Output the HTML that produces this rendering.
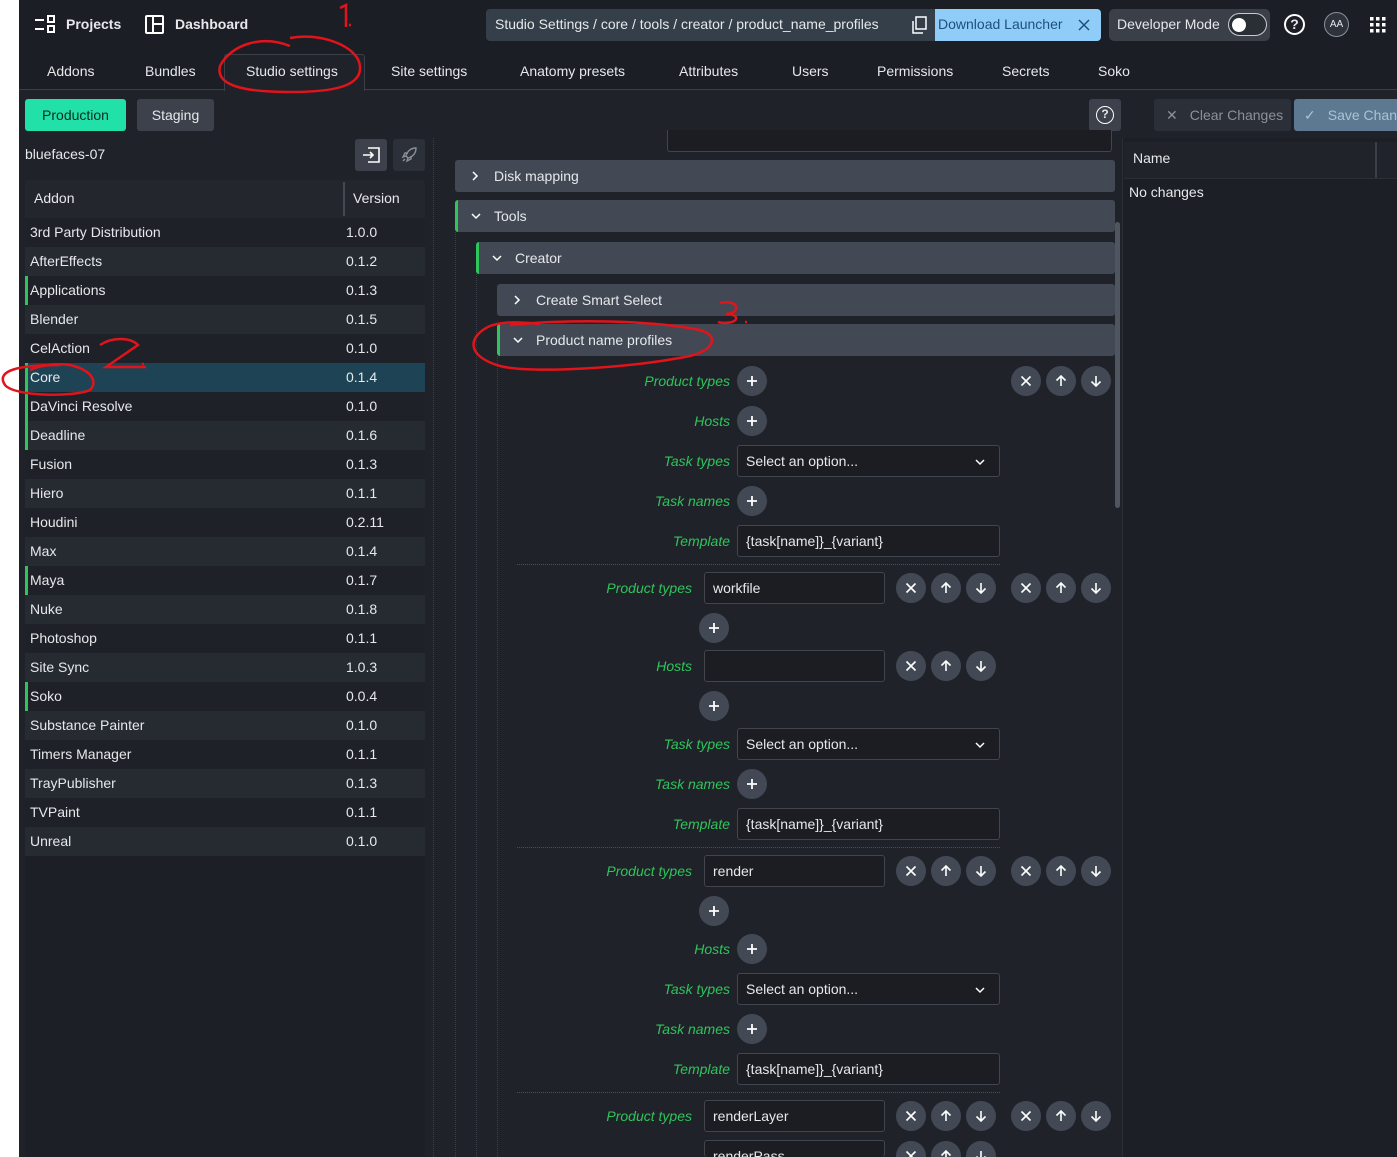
<!DOCTYPE html>
<html style="overflow:hidden;width:1397px;height:1157px"><head><meta charset="utf-8"><style>
*{box-sizing:border-box;margin:0;padding:0}
html{overflow:hidden}
body{width:1397px;height:1157px;overflow:hidden;background:#1f2229;font-family:"Liberation Sans",sans-serif;font-size:14px;color:#e6e8eb;position:relative}
.a{position:absolute}
.t{position:absolute;white-space:nowrap}
.lbl{position:absolute;width:200px;text-align:right;font-style:italic;color:#2ec55a;font-size:14px;white-space:nowrap}
.cb{position:absolute;width:30px;height:30px;border-radius:50%;background:#434954}
.cb svg{position:absolute;left:7px;top:7px}
.inp{position:absolute;height:32px;border:1px solid #40454e;border-radius:3px;background:#1b1d22;padding:0 8px;line-height:30px;white-space:nowrap}
.acc{position:absolute;height:32px;background:#434954;border-radius:3px;line-height:32px;font-size:14px}
.acc .ch{position:absolute;left:15px;top:11px}
.row{position:absolute;left:25px;width:400px;height:29px;line-height:29px}
.row span{position:absolute;left:5px}
.row b{position:absolute;left:321px;font-weight:normal}
.sep{position:absolute;left:517px;width:483px;border-top:1px dotted #4a4f58;height:0}
</style></head><body>
<svg width="0" height="0" style="position:absolute"><defs>
<symbol id="plus" viewBox="0 0 16 16"><path d="M8 3v10M3 8h10" stroke="#fff" stroke-width="1.8" fill="none"/></symbol>
<symbol id="x" viewBox="0 0 16 16"><path d="M3.5 3.5l9 9M12.5 3.5l-9 9" stroke="#fff" stroke-width="1.6" fill="none"/></symbol>
<symbol id="up" viewBox="0 0 16 16"><path d="M8 13V3M3.5 7.5L8 3l4.5 4.5" stroke="#fff" stroke-width="1.6" fill="none"/></symbol>
<symbol id="dn" viewBox="0 0 16 16"><path d="M8 3v10M3.5 8.5L8 13l4.5-4.5" stroke="#fff" stroke-width="1.6" fill="none"/></symbol>
<symbol id="chr" viewBox="0 0 10 10"><path d="M3 1l4 4-4 4" stroke="#fff" stroke-width="1.5" fill="none"/></symbol>
<symbol id="chd" viewBox="0 0 10 10"><path d="M1 3l4 4 4-4" stroke="#fff" stroke-width="1.5" fill="none"/></symbol>
</defs></svg>

<div class="a" style="left:0;top:0;width:19px;height:1157px;background:#fff"></div>
<div class="a" style="left:19px;top:0;width:1378px;height:90px;background:#1b1e24;border-bottom:1px solid #3a3f48"></div>
<svg class="a" style="left:34px;top:15px" width="22" height="18"><path d="M1 5h9M1 14h9" stroke="#fff" stroke-width="2"/><rect x="14" y="1" width="6" height="6" fill="none" stroke="#fff" stroke-width="2"/><rect x="14" y="11" width="6" height="6" fill="none" stroke="#fff" stroke-width="2"/></svg>
<div class="t" style="left:66px;top:16px;font-weight:bold">Projects</div>
<svg class="a" style="left:145px;top:15px" width="19" height="19"><rect x="1" y="1" width="17" height="17" rx="1" fill="none" stroke="#fff" stroke-width="2"/><path d="M8 1v17M8 9h10" stroke="#fff" stroke-width="2"/></svg>
<div class="t" style="left:175px;top:16px;font-weight:bold">Dashboard</div>
<div class="a" style="left:486px;top:9px;width:452px;height:32px;background:#343f49;border-radius:4px"></div>
<div class="t" style="left:495px;top:16px">Studio Settings / core / tools / creator / product_name_profiles</div>
<svg class="a" style="left:912px;top:16px" width="16" height="18"><path d="M4 1h10v12H4z M1 5v12h10" fill="none" stroke="#fff" stroke-width="1.5"/></svg>
<div class="a" style="left:935px;top:9px;width:166px;height:32px;background:#8fcdf8;border-radius:0 4px 4px 0"></div>
<div class="t" style="left:938px;top:16px;color:#1e4f7e">Download Launcher</div>
<svg class="a" style="left:1078px;top:19px" width="12" height="12"><path d="M1 1l10 10M11 1L1 11" stroke="#1e4f7e" stroke-width="1.5"/></svg>
<div class="a" style="left:1109px;top:9px;width:161px;height:32px;background:#3a3f48;border-radius:5px"></div>
<div class="t" style="left:1117px;top:16px">Developer Mode</div>
<div class="a" style="left:1228px;top:13px;width:39px;height:23px;border:1.5px solid #c8ccd2;border-radius:12px;background:#2a2e35"></div>
<div class="a" style="left:1232px;top:18px;width:14px;height:14px;border-radius:50%;background:#fff"></div>
<div class="a" style="left:1284px;top:14px;width:21px;height:21px;border:2px solid #fff;border-radius:50%;text-align:center;font-weight:bold;font-size:14px;line-height:17px">?</div>
<div class="a" style="left:1324px;top:12px;width:25px;height:25px;border:1px solid #8a9099;border-radius:50%;background:#2e323a;text-align:center;font-size:10px;line-height:23px">AA</div>
<svg class="a" style="left:1370px;top:17px" width="16" height="16" fill="#fff"><rect x="0" y="0" width="3.5" height="3.5"/><rect x="6" y="0" width="3.5" height="3.5"/><rect x="12" y="0" width="3.5" height="3.5"/><rect x="0" y="6" width="3.5" height="3.5"/><rect x="6" y="6" width="3.5" height="3.5"/><rect x="12" y="6" width="3.5" height="3.5"/><rect x="0" y="12" width="3.5" height="3.5"/><rect x="6" y="12" width="3.5" height="3.5"/><rect x="12" y="12" width="3.5" height="3.5"/></svg>

<div class="a" style="left:224px;top:54px;width:141px;height:37px;background:#1f2229;border:1px solid #3a3f48;border-bottom:none;border-radius:3px 3px 0 0"></div>
<div class="t" style="left:47px;top:63px">Addons</div>
<div class="t" style="left:145px;top:63px">Bundles</div>
<div class="t" style="left:246px;top:63px">Studio settings</div>
<div class="t" style="left:391px;top:63px">Site settings</div>
<div class="t" style="left:520px;top:63px">Anatomy presets</div>
<div class="t" style="left:679px;top:63px">Attributes</div>
<div class="t" style="left:792px;top:63px">Users</div>
<div class="t" style="left:877px;top:63px">Permissions</div>
<div class="t" style="left:1002px;top:63px">Secrets</div>
<div class="t" style="left:1098px;top:63px">Soko</div>

<div class="a" style="left:25px;top:99px;width:101px;height:32px;background:#21e1a8;border-radius:3px;color:#0f2a22;text-align:center;line-height:32px">Production</div>
<div class="a" style="left:137px;top:99px;width:77px;height:32px;background:#3c414b;border-radius:3px;text-align:center;line-height:32px">Staging</div>
<div class="a" style="left:1089px;top:99px;width:32px;height:32px;background:#3c414b;border-radius:3px"></div>
<div class="a" style="left:1096px;top:106px;width:18px;height:18px;border:1.6px solid #fff;border-radius:50%;text-align:center;font-size:12px;font-weight:bold;line-height:15px">?</div>
<div class="a" style="left:1154px;top:99px;width:137px;height:32px;background:#2b2f37;border-radius:3px;color:#8b919a;line-height:32px"><span style="margin-left:12px">✕</span><span style="margin-left:12px">Clear Changes</span></div>
<div class="a" style="left:1294px;top:99px;width:110px;height:32px;background:#5c7991;border-radius:3px;color:#aac2d6;line-height:32px;white-space:nowrap"><span style="margin-left:10px">✓</span><span style="margin-left:12px">Save Changes</span></div>

<div class="a" style="left:19px;top:138px;width:414px;height:1019px;background:#1f2229"></div>
<div class="t" style="left:25px;top:146px">bluefaces-07</div>
<div class="a" style="left:355px;top:139px;width:32px;height:32px;background:#3c414b;border-radius:3px"></div>
<svg class="a" style="left:362px;top:147px" width="18" height="16"><path d="M6 1h11v14H6M1 8h10M8 5l3 3-3 3" fill="none" stroke="#fff" stroke-width="1.6"/></svg>
<div class="a" style="left:393px;top:139px;width:32px;height:32px;background:#2c3038;border-radius:3px"></div>
<svg class="a" style="left:400px;top:146px" width="18" height="18"><path d="M16 2c-6 0-9 4-10 8l2 2c4-1 8-4 8-10zM6 10l-3 1 2-4h3M8 12l-1 3 4-2v-3M3 15l2-2" fill="none" stroke="#8a9099" stroke-width="1.4"/></svg>
<div class="a" style="left:25px;top:180px;width:400px;height:977px;background:#1c1f25;border-radius:4px 4px 0 0"></div>
<div class="a" style="left:25px;top:180px;width:400px;height:38px;background:#23262d;border-radius:4px 4px 0 0"></div>
<div class="a" style="left:343px;top:182px;width:2px;height:34px;background:#444952"></div>
<div class="t" style="left:34px;top:190px">Addon</div>
<div class="t" style="left:353px;top:190px">Version</div>

<div class="row" style="top:218px;background:#1e2127"><span>3rd Party Distribution</span><b>1.0.0</b></div>
<div class="row" style="top:247px;background:#262a31"><span>AfterEffects</span><b>0.1.2</b></div>
<div class="row" style="top:276px;background:#1e2127"><span>Applications</span><b>0.1.3</b></div>
<div class="row" style="top:305px;background:#262a31"><span>Blender</span><b>0.1.5</b></div>
<div class="row" style="top:334px;background:#1e2127"><span>CelAction</span><b>0.1.0</b></div>
<div class="row" style="top:363px;background:#1e4354"><span>Core</span><b>0.1.4</b></div>
<div class="row" style="top:392px;background:#1e2127"><span>DaVinci Resolve</span><b>0.1.0</b></div>
<div class="row" style="top:421px;background:#262a31"><span>Deadline</span><b>0.1.6</b></div>
<div class="row" style="top:450px;background:#1e2127"><span>Fusion</span><b>0.1.3</b></div>
<div class="row" style="top:479px;background:#262a31"><span>Hiero</span><b>0.1.1</b></div>
<div class="row" style="top:508px;background:#1e2127"><span>Houdini</span><b>0.2.11</b></div>
<div class="row" style="top:537px;background:#262a31"><span>Max</span><b>0.1.4</b></div>
<div class="row" style="top:566px;background:#1e2127"><span>Maya</span><b>0.1.7</b></div>
<div class="row" style="top:595px;background:#262a31"><span>Nuke</span><b>0.1.8</b></div>
<div class="row" style="top:624px;background:#1e2127"><span>Photoshop</span><b>0.1.1</b></div>
<div class="row" style="top:653px;background:#262a31"><span>Site Sync</span><b>1.0.3</b></div>
<div class="row" style="top:682px;background:#1e2127"><span>Soko</span><b>0.0.4</b></div>
<div class="row" style="top:711px;background:#262a31"><span>Substance Painter</span><b>0.1.0</b></div>
<div class="row" style="top:740px;background:#1e2127"><span>Timers Manager</span><b>0.1.1</b></div>
<div class="row" style="top:769px;background:#262a31"><span>TrayPublisher</span><b>0.1.3</b></div>
<div class="row" style="top:798px;background:#1e2127"><span>TVPaint</span><b>0.1.1</b></div>
<div class="row" style="top:827px;background:#262a31"><span>Unreal</span><b>0.1.0</b></div>
<div class="a" style="left:25px;top:276px;width:3px;height:29px;background:#2ec55a"></div>
<div class="a" style="left:25px;top:363px;width:3px;height:87px;background:#2ec55a"></div>
<div class="a" style="left:25px;top:566px;width:3px;height:29px;background:#2ec55a"></div>
<div class="a" style="left:25px;top:682px;width:3px;height:29px;background:#2ec55a"></div>

<div class="a" style="left:433px;top:138px;width:1px;height:1019px;border-left:1px dotted #3a3f48"></div>
<div class="a" style="left:455px;top:232px;width:1px;height:925px;border-left:1px dotted #3a3f48"></div>
<div class="a" style="left:476px;top:274px;width:1px;height:883px;border-left:1px dotted #3a3f48"></div>
<div class="a" style="left:497px;top:356px;width:1px;height:801px;border-left:1px dotted #3a3f48"></div>
<div class="a" style="left:667px;top:130px;width:445px;height:22px;border:1px solid #40454e;border-top:none;border-radius:0 0 3px 3px;background:#1b1d22"></div>

<div class="acc" style="left:455px;top:160px;width:660px"><svg class="ch" width="10" height="10"><use href="#chr"/></svg><span style="margin-left:39px">Disk mapping</span></div>
<div class="acc" style="left:455px;top:200px;width:660px;border-left:3px solid #2ec55a"><svg class="ch" width="10" height="10" style="left:13px"><use href="#chd"/></svg><span style="margin-left:36px">Tools</span></div>
<div class="acc" style="left:476px;top:242px;width:639px;border-left:3px solid #2ec55a"><svg class="ch" width="10" height="10" style="left:13px"><use href="#chd"/></svg><span style="margin-left:36px">Creator</span></div>
<div class="acc" style="left:497px;top:284px;width:618px"><svg class="ch" width="10" height="10"><use href="#chr"/></svg><span style="margin-left:39px">Create Smart Select</span></div>
<div class="acc" style="left:497px;top:324px;width:618px;border-left:3px solid #2ec55a"><svg class="ch" width="10" height="10" style="left:13px"><use href="#chd"/></svg><span style="margin-left:36px">Product name profiles</span></div>
<div class="a" style="left:1115px;top:222px;width:5px;height:286px;background:#50565f;border-radius:3px"></div>

<div class="lbl" style="left:530px;top:373px">Product types</div>
<div class="cb" style="left:737px;top:366px"><svg width="16" height="16"><use href="#plus"/></svg></div>
<div class="cb" style="left:1011px;top:366px"><svg width="16" height="16"><use href="#x"/></svg></div>
<div class="cb" style="left:1046px;top:366px"><svg width="16" height="16"><use href="#up"/></svg></div>
<div class="cb" style="left:1081px;top:366px"><svg width="16" height="16"><use href="#dn"/></svg></div>
<div class="lbl" style="left:530px;top:413px">Hosts</div>
<div class="cb" style="left:737px;top:406px"><svg width="16" height="16"><use href="#plus"/></svg></div>
<div class="lbl" style="left:530px;top:453px">Task types</div>
<div class="inp" style="left:737px;top:445px;width:263px">Select an option...<svg class="a" style="right:14px;top:11px" width="10" height="10"><use href="#chd"/></svg></div>
<div class="lbl" style="left:530px;top:493px">Task names</div>
<div class="cb" style="left:737px;top:486px"><svg width="16" height="16"><use href="#plus"/></svg></div>
<div class="lbl" style="left:530px;top:533px">Template</div>
<div class="inp" style="left:737px;top:525px;width:263px">{task[name]}_{variant}</div>
<div class="sep" style="top:564px"></div>

<div class="lbl" style="left:492px;top:580px">Product types</div>
<div class="inp" style="left:704px;top:572px;width:181px">workfile</div>
<div class="cb" style="left:896px;top:573px"><svg width="16" height="16"><use href="#x"/></svg></div>
<div class="cb" style="left:931px;top:573px"><svg width="16" height="16"><use href="#up"/></svg></div>
<div class="cb" style="left:966px;top:573px"><svg width="16" height="16"><use href="#dn"/></svg></div>
<div class="cb" style="left:1011px;top:573px"><svg width="16" height="16"><use href="#x"/></svg></div>
<div class="cb" style="left:1046px;top:573px"><svg width="16" height="16"><use href="#up"/></svg></div>
<div class="cb" style="left:1081px;top:573px"><svg width="16" height="16"><use href="#dn"/></svg></div>
<div class="cb" style="left:699px;top:613px"><svg width="16" height="16"><use href="#plus"/></svg></div>
<div class="lbl" style="left:492px;top:658px">Hosts</div>
<div class="inp" style="left:704px;top:650px;width:181px"></div>
<div class="cb" style="left:896px;top:651px"><svg width="16" height="16"><use href="#x"/></svg></div>
<div class="cb" style="left:931px;top:651px"><svg width="16" height="16"><use href="#up"/></svg></div>
<div class="cb" style="left:966px;top:651px"><svg width="16" height="16"><use href="#dn"/></svg></div>
<div class="cb" style="left:699px;top:691px"><svg width="16" height="16"><use href="#plus"/></svg></div>
<div class="lbl" style="left:530px;top:736px">Task types</div>
<div class="inp" style="left:737px;top:728px;width:263px">Select an option...<svg class="a" style="right:14px;top:11px" width="10" height="10"><use href="#chd"/></svg></div>
<div class="lbl" style="left:530px;top:776px">Task names</div>
<div class="cb" style="left:737px;top:769px"><svg width="16" height="16"><use href="#plus"/></svg></div>
<div class="lbl" style="left:530px;top:816px">Template</div>
<div class="inp" style="left:737px;top:808px;width:263px">{task[name]}_{variant}</div>
<div class="sep" style="top:847px"></div>

<div class="lbl" style="left:492px;top:863px">Product types</div>
<div class="inp" style="left:704px;top:855px;width:181px">render</div>
<div class="cb" style="left:896px;top:856px"><svg width="16" height="16"><use href="#x"/></svg></div>
<div class="cb" style="left:931px;top:856px"><svg width="16" height="16"><use href="#up"/></svg></div>
<div class="cb" style="left:966px;top:856px"><svg width="16" height="16"><use href="#dn"/></svg></div>
<div class="cb" style="left:1011px;top:856px"><svg width="16" height="16"><use href="#x"/></svg></div>
<div class="cb" style="left:1046px;top:856px"><svg width="16" height="16"><use href="#up"/></svg></div>
<div class="cb" style="left:1081px;top:856px"><svg width="16" height="16"><use href="#dn"/></svg></div>
<div class="cb" style="left:699px;top:896px"><svg width="16" height="16"><use href="#plus"/></svg></div>
<div class="lbl" style="left:530px;top:941px">Hosts</div>
<div class="cb" style="left:737px;top:934px"><svg width="16" height="16"><use href="#plus"/></svg></div>
<div class="lbl" style="left:530px;top:981px">Task types</div>
<div class="inp" style="left:737px;top:973px;width:263px">Select an option...<svg class="a" style="right:14px;top:11px" width="10" height="10"><use href="#chd"/></svg></div>
<div class="lbl" style="left:530px;top:1021px">Task names</div>
<div class="cb" style="left:737px;top:1014px"><svg width="16" height="16"><use href="#plus"/></svg></div>
<div class="lbl" style="left:530px;top:1061px">Template</div>
<div class="inp" style="left:737px;top:1053px;width:263px">{task[name]}_{variant}</div>
<div class="sep" style="top:1092px"></div>

<div class="lbl" style="left:492px;top:1108px">Product types</div>
<div class="inp" style="left:704px;top:1100px;width:181px">renderLayer</div>
<div class="cb" style="left:896px;top:1101px"><svg width="16" height="16"><use href="#x"/></svg></div>
<div class="cb" style="left:931px;top:1101px"><svg width="16" height="16"><use href="#up"/></svg></div>
<div class="cb" style="left:966px;top:1101px"><svg width="16" height="16"><use href="#dn"/></svg></div>
<div class="cb" style="left:1011px;top:1101px"><svg width="16" height="16"><use href="#x"/></svg></div>
<div class="cb" style="left:1046px;top:1101px"><svg width="16" height="16"><use href="#up"/></svg></div>
<div class="cb" style="left:1081px;top:1101px"><svg width="16" height="16"><use href="#dn"/></svg></div>
<div class="inp" style="left:704px;top:1140px;width:181px;height:17px;overflow:hidden;border-bottom:none">renderPass</div>
<div class="a" style="left:896px;top:1141px;width:30px;height:16px;overflow:hidden"><div class="cb" style="left:0;top:0"><svg width="16" height="16"><use href="#x"/></svg></div></div>
<div class="a" style="left:931px;top:1141px;width:30px;height:16px;overflow:hidden"><div class="cb" style="left:0;top:0"><svg width="16" height="16"><use href="#up"/></svg></div></div>
<div class="a" style="left:966px;top:1141px;width:30px;height:16px;overflow:hidden"><div class="cb" style="left:0;top:0"><svg width="16" height="16"><use href="#dn"/></svg></div></div>

<div class="a" style="left:1122px;top:138px;width:275px;height:1019px;background:#1c1f25;border-left:1px solid #2a2e35"></div>
<div class="a" style="left:1124px;top:142px;width:273px;height:37px;background:#202329;border-bottom:1px solid #2a2e35"></div>
<div class="a" style="left:1375px;top:142px;width:2px;height:36px;background:#3a3f48"></div>
<div class="t" style="left:1133px;top:150px">Name</div>
<div class="t" style="left:1129px;top:184px">No changes</div>

<svg class="a" style="left:0;top:0" width="1397" height="400" fill="none" stroke="#e0141a" stroke-width="2.5">
<path d="M340 8l6-3v22M349 25h2"/>
<path d="M290 46c-30-12-60 0-70 20c-5 20 25 26 70 26c45 0 72-6 70-26c-2-20-40-34-70-28"/>
<path d="M100 345c12-8 30-8 38 0l-32 22h40M142 364h2"/>
<path d="M60 365c-40 0-65 5-55 20c10 12 70 12 85 5c8-8 2-20-20-25c-10-2-30 0-40 5"/>
<path d="M720 303c8-2 18 0 16 6c-2 5-10 5-10 5c10 0 14 5 6 8c-8 2-14 0-14 0M745 322h2"/>
<path d="M510 325c60-6 140-5 190 5c20 6 14 20-10 26c-60 12-160 18-190 10c-35-10-32-30-10-40c14-5 30-4 50-2"/>
</svg>
</body></html>
